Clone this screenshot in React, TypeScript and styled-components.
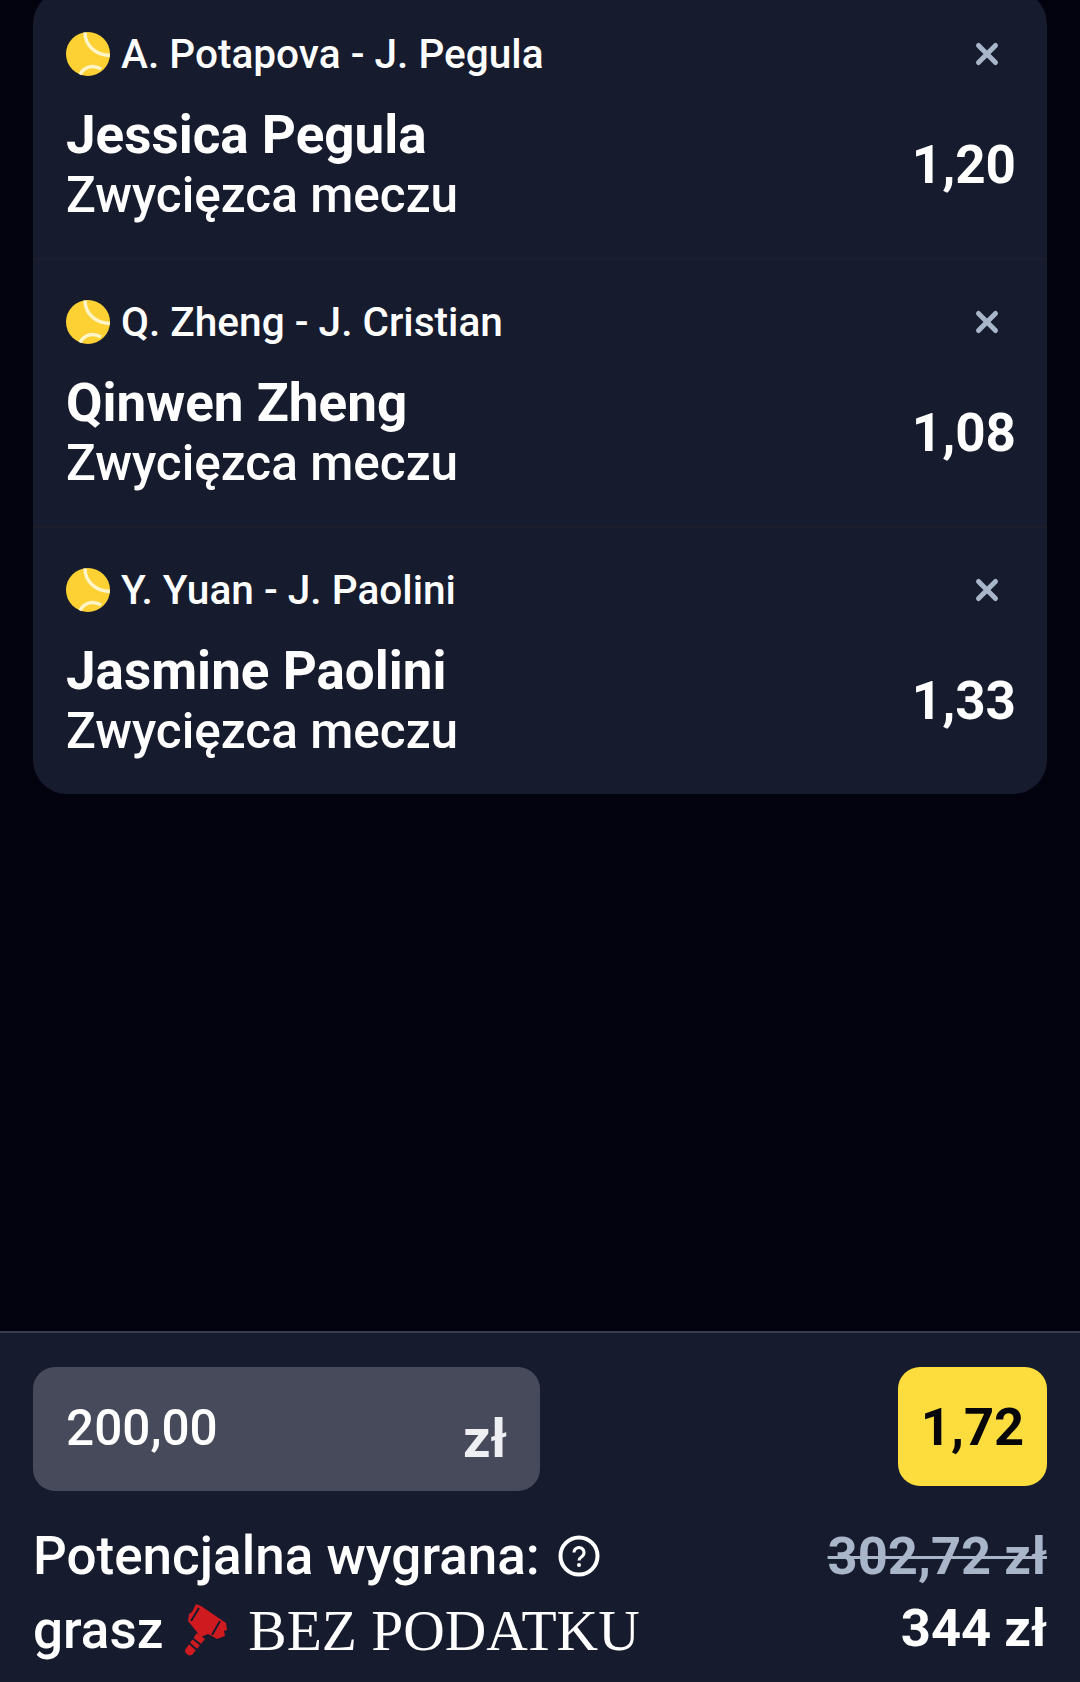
import * as React from 'react';
import styled, { createGlobalStyle } from 'styled-components';

const GlobalStyle = createGlobalStyle`
  html, body {
    margin: 0;
    padding: 0;
    background: #03030f;
  }
  * {
    box-sizing: border-box;
  }
`;

const Page = styled.div`
  width: 1080px;
  height: 1682px;
  overflow: hidden;
  display: flex;
  flex-direction: column;
  font-family: Roboto, "Liberation Sans", sans-serif;
  color: #fff;
`;

/* The list is scrolled a little, so its top edge sits above the window */
const BetCard = styled.div`
  margin: -10px 33px 0;
  background: #161b2e;
  border-radius: 34px;
`;

const BetRow = styled.div`
  height: 268px;
  padding: 40px 33px 0;
  border-top: 2px solid ${(p: { $first?: boolean }) => (p.$first ? 'transparent' : '#1d1e2d')};
`;

const MatchLine = styled.div`
  display: flex;
  align-items: center;
  height: 44px;
  gap: 11px;
  font-size: 40.6px;
  font-weight: 500;
`;

const MatchName = styled.span`
  flex: 1;
`;

const CloseButton = styled.div`
  width: 26px;
  height: 26px;
  margin-right: 14px;
  display: flex;
`;

const PickLine = styled.div`
  display: flex;
  justify-content: space-between;
  align-items: center;
  margin-top: 29px;
`;

const PickName = styled.div`
  font-size: 53px;
  font-weight: 700;
  line-height: 60px;
`;

const MarketName = styled.div`
  font-size: 49.5px;
  font-weight: 500;
  line-height: 60px;
`;

const RowOdds = styled.div`
  font-size: 53px;
  font-weight: 700;
  margin-right: -2px;
`;

const Footer = styled.div`
  margin-top: auto;
  height: 351px;
  background: #161b2e;
  border-top: 2px solid #3a3d50;
  padding: 34px 33px 0;
`;

const StakeRow = styled.div`
  display: flex;
  justify-content: space-between;
  align-items: flex-start;
`;

const StakeInput = styled.div`
  width: 507px;
  height: 124px;
  padding: 0 33px;
  background: #474a5a;
  border-radius: 22px;
  display: flex;
  justify-content: space-between;
`;

const StakeValue = styled.span`
  font-size: 49.5px;
  font-weight: 500;
  line-height: 122px;
`;

const StakeCurrency = styled.span`
  font-size: 54px;
  font-weight: 700;
  line-height: 144px;
  color: #eeeff2;
`;

const OddsBadge = styled.div`
  width: 149px;
  height: 119px;
  background: #fddc3e;
  border-radius: 22px;
  color: #05050a;
  font-size: 52.5px;
  font-weight: 700;
  display: flex;
  align-items: center;
  justify-content: center;
`;

const SummaryRow = styled.div`
  display: flex;
  justify-content: space-between;
  align-items: center;
  height: 74px;
`;

const FirstSummaryRow = styled(SummaryRow)`
  margin-top: 28px;
`;

const SummaryLabel = styled.div`
  display: flex;
  align-items: center;
  font-size: 53px;
  font-weight: 500;
`;

const HelpIcon = styled.svg`
  width: 42px;
  height: 42px;
  margin-left: 18px;
`;

const HammerIcon = styled.svg`
  width: 44px;
  height: 52px;
  margin: 0 20px 0 21px;
`;

const TaxFree = styled.span`
  font-family: "Liberation Serif", serif;
  font-size: 57.5px;
  font-weight: 400;
`;

const OldWin = styled.div`
  font-size: 52.5px;
  font-weight: 700;
  color: #a9b5c8;
  text-decoration: line-through;
  text-decoration-thickness: 3px;
`;

const NewWin = styled.div`
  font-size: 52.5px;
  font-weight: 700;
  margin-bottom: 5px;
`;

const bets = [
  { match: 'A. Potapova - J. Pegula', pick: 'Jessica Pegula', odds: '1,20' },
  { match: 'Q. Zheng - J. Cristian', pick: 'Qinwen Zheng', odds: '1,08' },
  { match: 'Y. Yuan - J. Paolini', pick: 'Jasmine Paolini', odds: '1,33' },
];

function TennisBall() {
  return (
    <svg width="44" height="44" viewBox="0 0 44 44">
      <circle cx="22" cy="22" r="22" fill="#fdd133" />
      <path d="M19 0.5C19 13 29 23 43.8 23.5" fill="none" stroke="#fff5c8" strokeWidth="3.5" />
      <path d="M14 42.5C18 35 26 32 35 37" fill="none" stroke="#fff5c8" strokeWidth="3.5" />
    </svg>
  );
}

function CloseIcon() {
  return (
    <CloseButton>
      <svg width="26" height="26" viewBox="0 0 26 26">
        <path d="M4.5 4.5L21.5 21.5M21.5 4.5L4.5 21.5" stroke="#a9b5c8" strokeWidth="5" strokeLinecap="round" />
      </svg>
    </CloseButton>
  );
}

function App() {
  return (
    <Page>
      <GlobalStyle />
      <BetCard>
        {bets.map((bet, i) => (
          <BetRow key={bet.pick} $first={i === 0}>
            <MatchLine>
              <TennisBall />
              <MatchName>{bet.match}</MatchName>
              <CloseIcon />
            </MatchLine>
            <PickLine>
              <div>
                <PickName>{bet.pick}</PickName>
                <MarketName>Zwycięzca meczu</MarketName>
              </div>
              <RowOdds>{bet.odds}</RowOdds>
            </PickLine>
          </BetRow>
        ))}
      </BetCard>
      <Footer>
        <StakeRow>
          <StakeInput>
            <StakeValue>200,00</StakeValue>
            <StakeCurrency>zł</StakeCurrency>
          </StakeInput>
          <OddsBadge>1,72</OddsBadge>
        </StakeRow>
        <FirstSummaryRow>
          <SummaryLabel>
            Potencjalna wygrana:
            <HelpIcon viewBox="0 0 42 42">
              <circle cx="21" cy="21" r="18.5" fill="none" stroke="#fff" strokeWidth="4" />
              <path d="M16 17.5a5 5 0 1 1 7.7 4.2c-1.8 1.2-2.7 2-2.7 3.8" fill="none" stroke="#fff" strokeWidth="3" />
              <circle cx="21" cy="30" r="2" fill="#fff" />
            </HelpIcon>
          </SummaryLabel>
          <OldWin>302,72 zł</OldWin>
        </FirstSummaryRow>
        <SummaryRow>
          <SummaryLabel>
            grasz
            <HammerIcon viewBox="0 0 44 52">
              <path d="M12 0L17 2L42 19L43 26L40 27L41 32L33 35L24 30L17 33L4 17L5 10L8 8Z" fill="#cf1a20" />
              <path d="M13 29L21 35L8 51C5 52 1 50 1 46Z" fill="#cf1a20" />
              <path d="M8 34L17 41M5 39L13 46M15 4L7 17M36 17L28 31" stroke="#161b2e" strokeWidth="2" />
            </HammerIcon>
            <TaxFree>BEZ PODATKU</TaxFree>
          </SummaryLabel>
          <NewWin>344 zł</NewWin>
        </SummaryRow>
      </Footer>
    </Page>
  );
}

export default App;
